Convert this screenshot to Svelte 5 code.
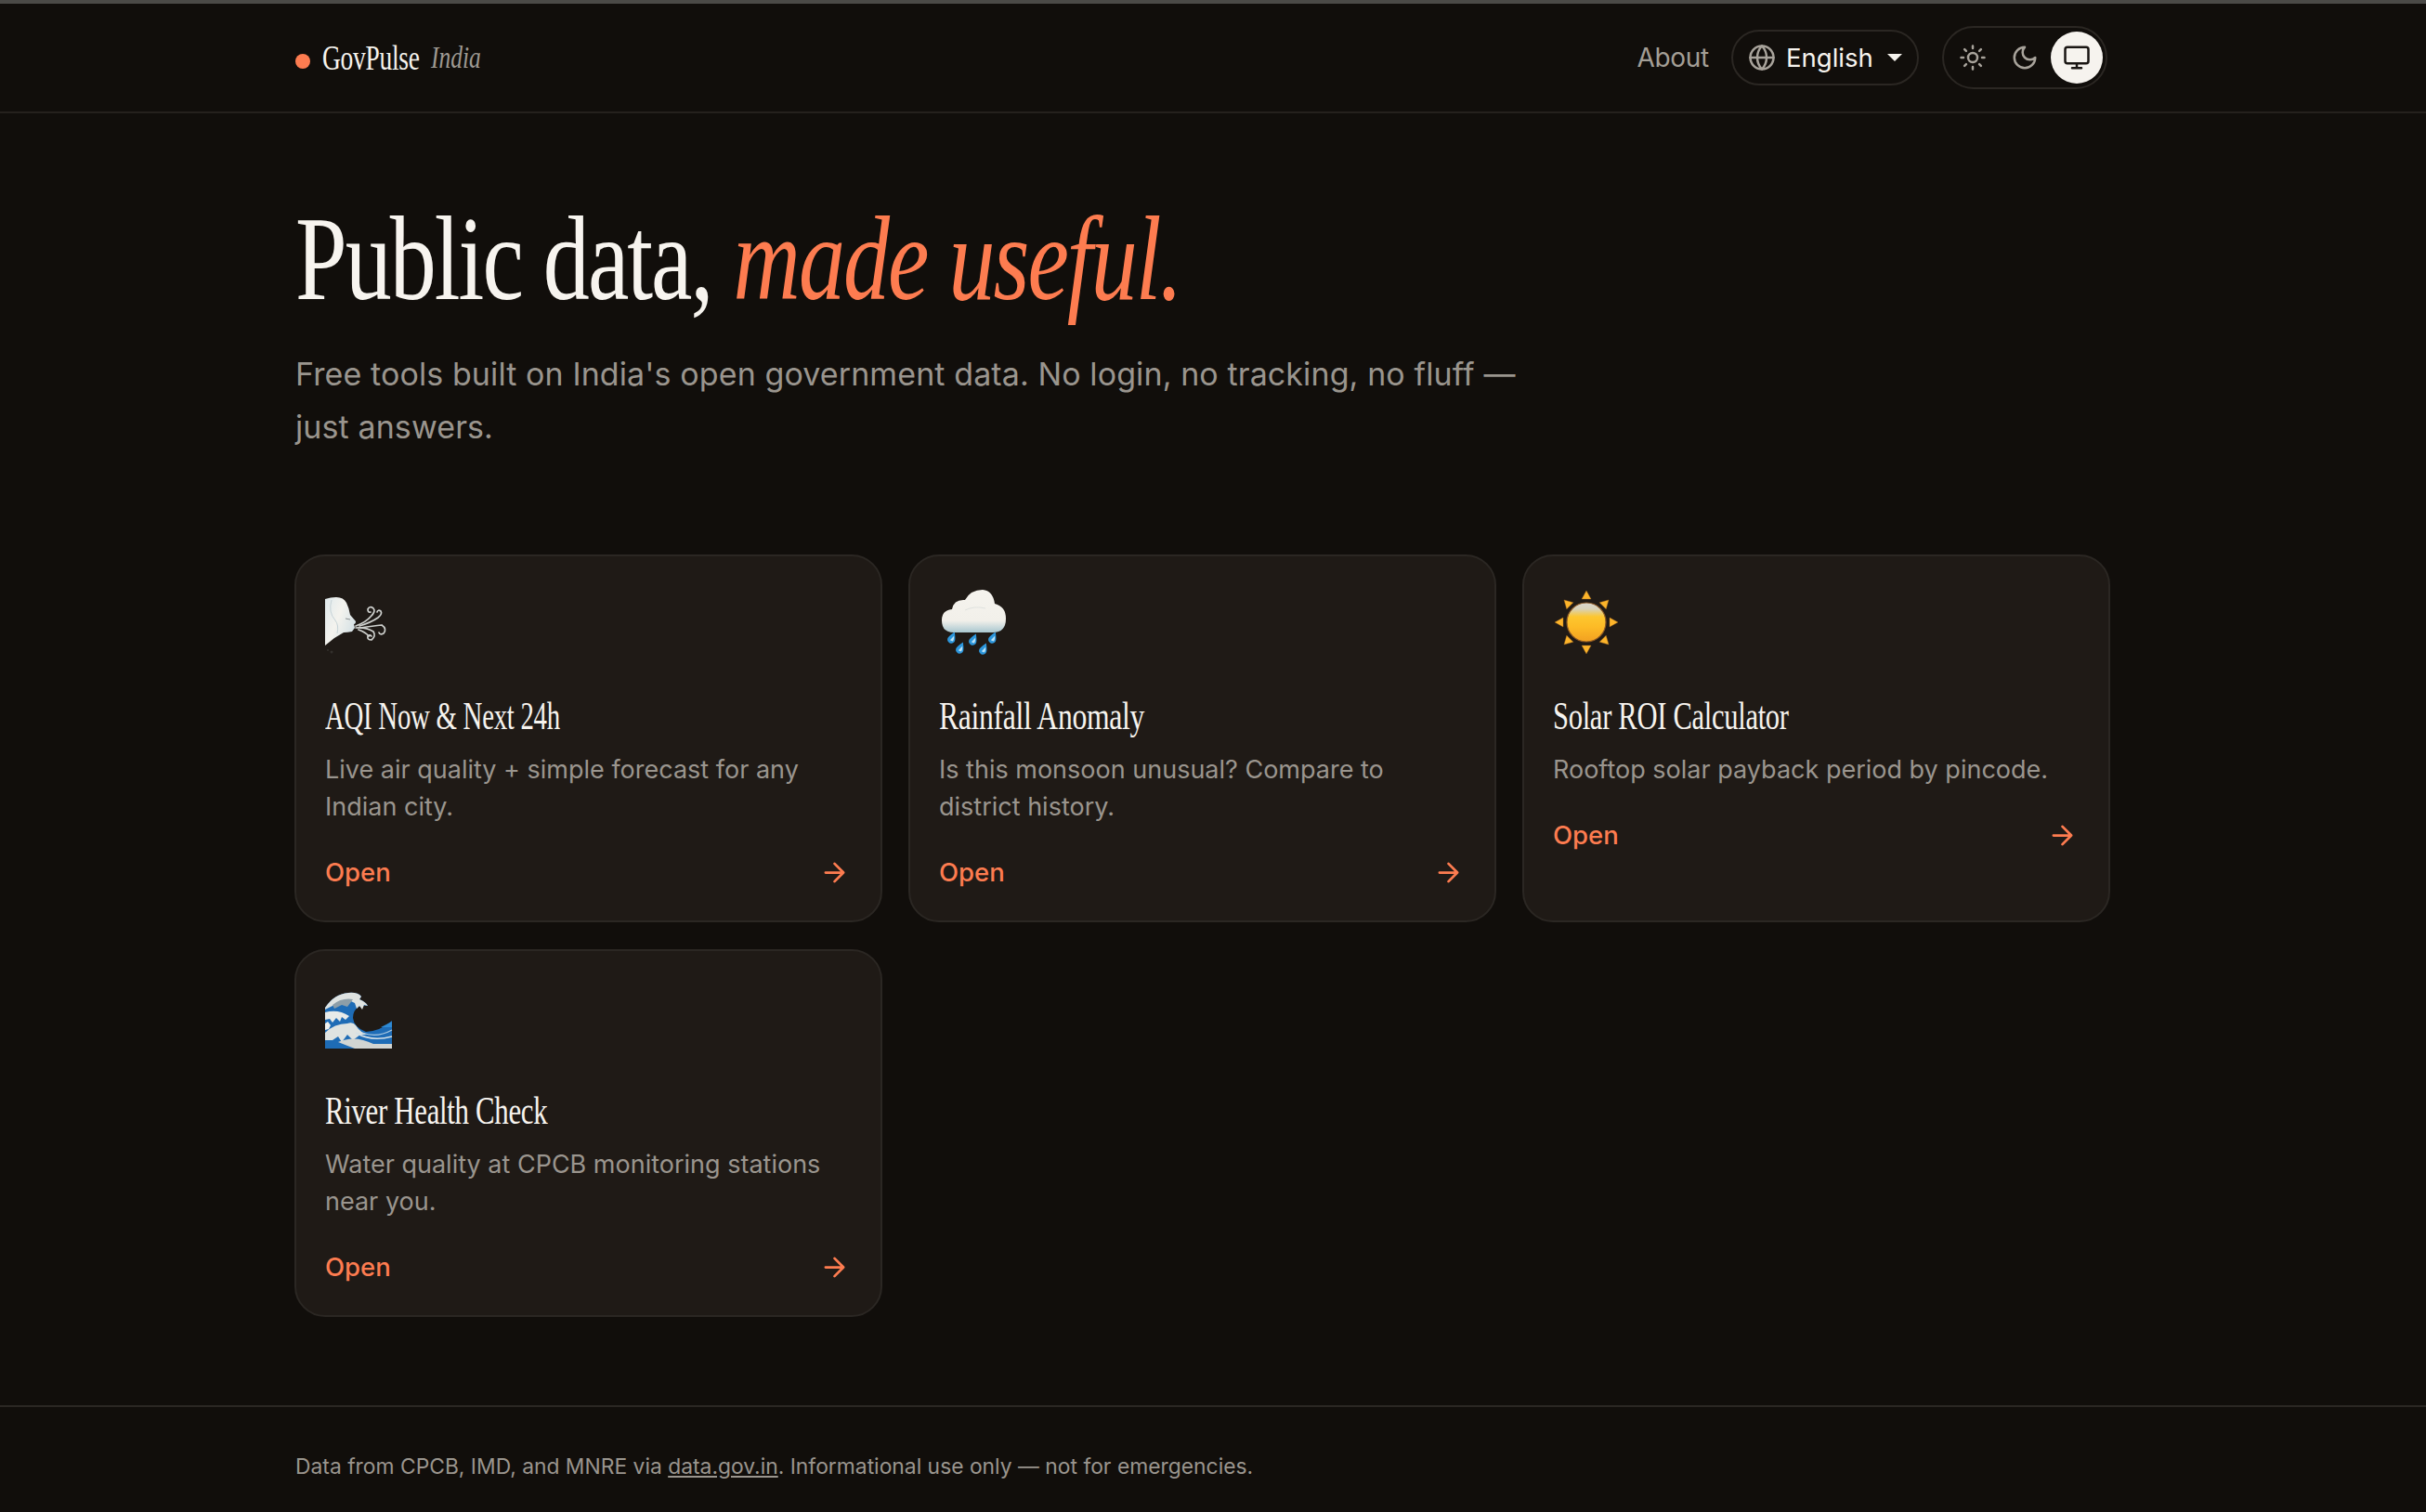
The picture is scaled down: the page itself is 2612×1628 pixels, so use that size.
<script>
  const tools = [
    { icon: 'wind', title: 'AQI Now & Next 24h', desc: 'Live air quality + simple forecast for any Indian city.', squeeze: 0.687 },
    { icon: 'rain', title: 'Rainfall Anomaly', desc: 'Is this monsoon unusual? Compare to district history.', squeeze: 0.754 },
    { icon: 'sun', title: 'Solar ROI Calculator', desc: 'Rooftop solar payback period by pincode.', squeeze: 0.728 },
    { icon: 'wave', title: 'River Health Check', desc: 'Water quality at CPCB monitoring stations near you.', squeeze: 0.734 }
  ];
  const rays = [0, 45, 90, 135, 180, 225, 270, 315];
  const drops = [[14, 52], [37, 54], [58, 52], [23, 63], [48, 64]];
</script>

<div class="page">
  <header>
    <div class="brand">
      <span class="dot"></span>
      <span class="name">GovPulse</span>
      <span class="region">India</span>
    </div>
    <nav>
      <span class="about">About</span>
      <div class="lang">
        <svg class="ico" viewBox="0 0 24 24"><circle cx="12" cy="12" r="10" /><path d="M12 2a14.5 14.5 0 0 0 0 20 14.5 14.5 0 0 0 0-20" /><path d="M2 12h20" /></svg>
        <span>English</span>
        <i class="caret"></i>
      </div>
      <div class="theme">
        <button aria-label="Light">
          <svg class="ico" viewBox="0 0 24 24"><circle cx="12" cy="12" r="4" /><path d="M12 2v2M12 20v2M4.93 4.93l1.41 1.41M17.66 17.66l1.41 1.41M2 12h2M20 12h2M6.34 17.66l-1.41 1.41M19.07 4.93l-1.41 1.41" /></svg>
        </button>
        <button aria-label="Dark">
          <svg class="ico" viewBox="0 0 24 24"><path d="M12 3a6 6 0 0 0 9 9 9 9 0 1 1-9-9Z" /></svg>
        </button>
        <button class="on" aria-label="System">
          <svg class="ico" viewBox="0 0 24 24"><rect x="2" y="3" width="20" height="14" rx="2" /><path d="M8 21h8M12 17v4" /></svg>
        </button>
      </div>
    </nav>
  </header>

  <main>
    <h1>Public data, <em>made useful.</em></h1>
    <p class="lead">Free tools built on India's open government data. No login, no tracking, no fluff — just answers.</p>

    <div class="grid">
      {#each tools as tool}
        <article class="card">
          <div class="emoji">
            {#if tool.icon === 'wind'}
              <svg viewBox="0 0 72 72">
                <defs>
                  <linearGradient id="face" x1="0" y1="0" x2="1" y2="0.6">
                    <stop offset="0" stop-color="#dfe9ec" />
                    <stop offset="0.5" stop-color="#f4f3ee" />
                    <stop offset="1" stop-color="#d5e1e5" />
                  </linearGradient>
                </defs>
                <path d="M0 10 Q6 8 12 8 Q20 8 23 14 Q26 20 27 27 L33 34 Q33 37 31 37 L32 41 L29 45 Q24 46 20 46 L10 52 L0 60 Z" fill="url(#face)" />
                <path d="M7 11 Q3 24 11 33 Q15 38 13 47" fill="none" stroke="#c6d3d7" stroke-width="1" />
                <path d="M22 31l5 1" stroke="#8a8f90" stroke-width="1" />
                <g fill="none" stroke="#cfd1ce" stroke-width="1.7" stroke-linecap="round">
                  <path d="M33 39 Q44 35 49 29 Q55 23 52 20 Q48 17 46 21 Q46 25 49 24" />
                  <path d="M37 39 Q50 35 57 30 Q62 26 60 23 Q57 21 56 24" />
                  <path d="M33 41 Q44 40 52 45 Q55 50 50 54 Q45 54 46 50 Q48 48 50 50" />
                  <path d="M38 41 Q52 39 61 38 Q67 42 63 47 Q59 49 58 46" />
                  <path d="M36 43 Q44 46 47 50" />
                </g>
                <circle cx="7" cy="67" r="1.5" fill="#33302c" />
                <circle cx="3" cy="65" r="1" fill="#33302c" />
              </svg>
            {:else if tool.icon === 'rain'}
              <svg viewBox="0 0 72 72">
                <defs>
                  <linearGradient id="cloud" x1="0" y1="0" x2="0" y2="1">
                    <stop offset="0" stop-color="#f5f3ee" />
                    <stop offset="0.72" stop-color="#f2f0ea" />
                    <stop offset="1" stop-color="#a9c7d0" />
                  </linearGradient>
                </defs>
                <path d="M16 46 Q3 46 3 33 Q3 22 14 21 Q16 10 28 11 Q34 0 47 0 Q58 1 60 15 Q72 18 72 31 Q72 46 58 46 Z" fill="url(#cloud)" />
                <path d="M28 22 Q38 17 50 20" fill="none" stroke="#dfe2df" stroke-width="1" />
                {#each drops as d}
                  <g transform="translate({d[0]} {d[1]}) rotate(24)">
                    <path d="M0 -7 Q5 1 4 3 A4.2 4.2 0 0 1 -4 3 Q-5 1 0 -7 Z" fill="#2d97dc" />
                    <path d="M1 -3 Q3 1 2 3 L-1 3 Z" fill="#bfe3f5" />
                  </g>
                {/each}
              </svg>
            {:else if tool.icon === 'sun'}
              <svg viewBox="0 0 72 72">
                <defs>
                  <linearGradient id="ball" x1="0" y1="0" x2="0" y2="1">
                    <stop offset="0" stop-color="#d9d6cf" />
                    <stop offset="0.16" stop-color="#d8d2b8" />
                    <stop offset="0.36" stop-color="#fdc62f" />
                    <stop offset="0.62" stop-color="#fdbb26" />
                    <stop offset="1" stop-color="#f2a021" />
                  </linearGradient>
                </defs>
                {#each rays as a}
                  <path d="M36 1 L41 10 L31 10 Z" fill="#fcb42a" stroke="#a86a22" stroke-width="0.4" transform="rotate({a} 36 35)" />
                {/each}
                <circle cx="36" cy="35" r="21" fill="url(#ball)" stroke="#8f5a24" stroke-width="1.2" />
              </svg>
            {:else}
              <svg viewBox="0 0 72 72">
                <path d="M0 69 V25 Q10 10 25 9 Q35 8 39 13 L37 16 Q44 19 46 23 Q40 22 36 24 Q30 28 30 36 Q31 46 44 51 Q60 50 72 39 V69 Z" fill="#1e6cb6" />
                <path d="M0 25 Q10 10 25 9 Q35 8 39 13 L37 16 Q44 19 46 23 L42 22 L40 27 L37 23 L34 26 L32 20 Q22 14 8 23 L0 27 Z" fill="#dfe3e1" />
                <path d="M8 22 Q18 14 30 16 L24 24 L18 22 L10 26 Z" fill="#8d9ea8" />
                <path d="M0 30 Q14 26 26 34 L22 38 L18 35 L16 40 L12 36 L8 41 L5 37 L0 38 Z" fill="#e8ebe9" />
                <path d="M0 52 Q10 42 24 42 Q30 40 33 44 Q38 52 46 54 L38 54 L30 60 L24 54 L18 62 L14 56 L8 60 L0 60 Z" fill="#dfe3e1" />
                <path d="M0 42 L3 40 L6 44 L4 48 L0 49 Z" fill="#f0f1ef" />
                <path d="M14 62 Q32 54 52 64 L72 64 V69 H32 Q24 66 14 62 Z" fill="#d2d5d2" />
                <path d="M33 52 Q50 62 72 56" fill="none" stroke="#d5e0e6" stroke-width="1.5" />
                <path d="M40 52 Q56 58 72 49" fill="none" stroke="#a9c8e0" stroke-width="1.3" />
                <path d="M60 46 L72 40 V46 Z" fill="#2e8ad4" />
              </svg>
            {/if}
          </div>
          <h3><span style="transform: scaleX({tool.squeeze})">{tool.title}</span></h3>
          <p>{tool.desc}</p>
          <div class="open">
            <span>Open</span>
            <svg viewBox="0 0 24 24"><path d="M5 12h14M12 5l7 7-7 7" /></svg>
          </div>
        </article>
      {/each}
    </div>
  </main>

  <footer>
    <p>Data from CPCB, IMD, and MNRE via <u>data.gov.in</u>. Informational use only — not for emergencies.</p>
  </footer>
</div>

<style>
  :global(body) {
    margin: 0;
    background: #110e0b;
  }
  .page {
    min-height: 1628px;
    box-sizing: border-box;
    border-top: 4px solid #4b4a47;
    color: #f6f3ee;
    font-family: Inter, "Liberation Sans", sans-serif;
    display: flex;
    flex-direction: column;
  }
  header {
    height: 118px;
    box-sizing: border-box;
    border-bottom: 2px solid #25211d;
    padding: 0 343px 0 318px;
    display: flex;
    align-items: center;
    justify-content: space-between;
  }
  .brand {
    display: flex;
    align-items: center;
    height: 40px;
    margin-top: 2px;
  }
  .dot {
    width: 16px;
    height: 16px;
    border-radius: 50%;
    background: #fd7c50;
    margin: 6px 13px 0 0;
  }
  .name,
  .region,
  h1,
  h3 span {
    font-family: "Liberation Serif", serif;
    font-weight: 400;
    display: inline-block;
    transform-origin: left center;
    white-space: nowrap;
  }
  .name {
    font-size: 38px;
    width: 117px;
    margin-bottom: 3px;
    transform: scaleX(0.723);
    letter-spacing: -0.01em;
  }
  .region {
    font-size: 34px;
    font-style: italic;
    color: #9e9992;
    margin-bottom: 3px;
    transform: scaleX(0.75);
  }
  nav {
    display: flex;
    align-items: center;
  }
  .about {
    font-size: 28px;
    color: #a39e96;
    margin-right: 24px;
    letter-spacing: -0.01em;
  }
  .ico {
    width: 30px;
    height: 30px;
    fill: none;
    stroke: currentColor;
    stroke-width: 2;
    stroke-linecap: round;
    stroke-linejoin: round;
    display: block;
  }
  .lang {
    width: 202px;
    height: 60px;
    box-sizing: border-box;
    border: 2px solid #2b2723;
    border-radius: 30px;
    padding-left: 16px;
    display: flex;
    align-items: center;
    font-size: 27.5px;
    margin-right: 25px;
  }
  .lang .ico {
    color: #a8a39b;
    margin-right: 11px;
  }
  .caret {
    width: 0;
    height: 0;
    border-left: 8px solid transparent;
    border-right: 8px solid transparent;
    border-top: 8px solid #f6f3ee;
    margin-left: 15px;
  }
  .theme {
    width: 178px;
    height: 68px;
    box-sizing: border-box;
    border: 2px solid #2b2723;
    border-radius: 34px;
    padding: 4px 3px;
    display: flex;
    align-items: center;
  }
  .theme button {
    width: 56px;
    height: 56px;
    padding: 0;
    border: 0;
    border-radius: 50%;
    background: none;
    color: #a8a39b;
    display: flex;
    align-items: center;
    justify-content: center;
  }
  .theme .on {
    background: #f6f3ee;
    color: #1a1613;
  }
  main {
    flex: 1;
    padding: 0 340px 0 317px;
  }
  h1 {
    font-size: 130px;
    line-height: 150px;
    margin: 81px 0 0 1px;
    letter-spacing: -0.02em;
    transform: scaleX(0.77);
    display: block;
    color: #f7f4ef;
  }
  h1 em {
    color: #fd7c50;
    font-style: italic;
  }
  .lead {
    font-size: 34px;
    line-height: 56.5px;
    letter-spacing: 0.1px;
    color: #9a958e;
    margin: 22px 0 0 1px;
    max-width: 1340px;
  }
  .grid {
    margin-top: 109px;
    display: grid;
    grid-template-columns: repeat(3, 1fr);
    gap: 29px 28px;
  }
  .card {
    height: 396px;
    box-sizing: border-box;
    background: #1f1a16;
    border: 2px solid #2b2723;
    border-radius: 33px;
    padding: 36px 33px 0 31px;
  }
  .emoji {
    height: 72px;
  }
  .emoji svg {
    width: 72px;
    height: 72px;
    display: block;
    overflow: visible;
  }
  h3 {
    margin: 35px 0 0;
    font-size: 42px;
    line-height: 56px;
    font-weight: 400;
  }
  h3 span {
    letter-spacing: -0.01em;
  }
  .card p {
    margin: 10px 0 0;
    font-size: 27px;
    line-height: 40px;
    color: #9a958e;
  }
  .open {
    margin-top: 30px;
    display: flex;
    align-items: center;
    justify-content: space-between;
    color: #fd7c50;
    font-size: 27.5px;
    font-weight: 500;
    height: 40px;
  }
  .open svg {
    width: 33px;
    height: 33px;
    fill: none;
    stroke: currentColor;
    stroke-width: 2;
    stroke-linecap: round;
    stroke-linejoin: round;
  }
  footer {
    height: 115px;
    box-sizing: border-box;
    border-top: 2px solid #2b2723;
    padding: 14px 318px 0;
    display: flex;
    align-items: center;
    color: #9a958e;
    font-size: 22.85px;
  }
  footer p {
    margin: 0;
  }
</style>
